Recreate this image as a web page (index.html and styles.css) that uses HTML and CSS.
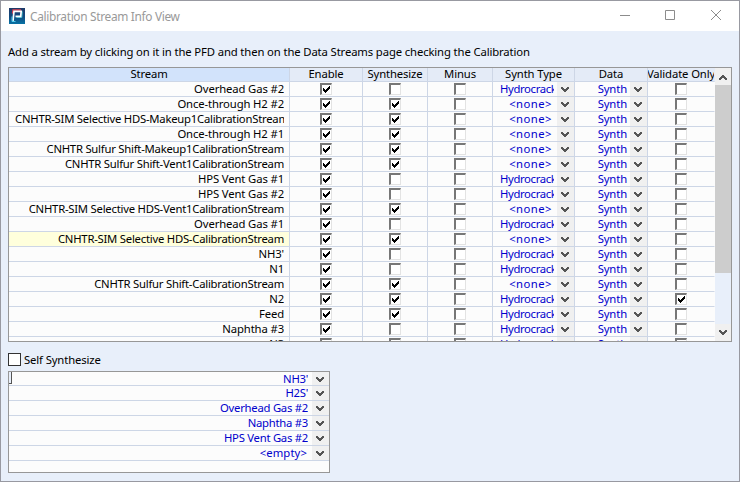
FILE: index.html
```html
<!DOCTYPE html>
<html lang="en">
<head>
<meta charset="utf-8">
<title>Calibration Stream Info View</title>
<link rel="stylesheet" href="styles.css">
</head>
<body>
<svg width="0" height="0" class="defs">
  <symbol id="chev" viewBox="0 0 8 6"><path d="M0 0h2v1h1v1h2v-1h1v-1h2v2h-1v1h-1v1h-1v1h-2v-1h-1v-1h-1v-1h-1z" fill="#555"/></symbol>
  <symbol id="tick" viewBox="0 0 7 7"><path d="M0 2h1v1h1v1h1v-1h1v-1h1v-1h1v-1h1v3h-1v1h-1v1h-1v1h-1v1h-1v-1h-1v-1h-1z" fill="#000"/></symbol>
</svg>
<div class="window">
  <header class="titlebar">
    <svg class="logo" width="16" height="16" viewBox="0 0 16 16">
      <defs><linearGradient id="lg" x2="0" y2="1"><stop offset="0" stop-color="#203a68"/><stop offset=".55" stop-color="#104a80"/><stop offset="1" stop-color="#0873a5"/></linearGradient></defs>
      <rect width="16" height="16" fill="url(#lg)"/>
      <path d="M3.5 5.500L4 2H12" fill="none" stroke="#e04052" stroke-width="1.3"/>
      <path d="M13.300 3.500l-.5 6H7.500" fill="none" stroke="#35b8c8" stroke-width="1"/>
      <path d="M4 12.800L5 3.400h7.200l-.5 4.900h-5.200" fill="none" stroke="#fff" stroke-width="1.700"/>
      <path d="M3 8.500v5h3.500" fill="none" stroke="#50cbed" stroke-width="1"/>
    </svg>
    <span class="title">Calibration Stream Info View</span>
    <svg class="controls" width="110" height="12" viewBox="0 0 110 12" fill="none" stroke="#8c8c8c"><path d="M0 5.5h10M45.500 .500h9v9h-9zM91 0l10 10M101 0l-10 10"/></svg>
  </header>
  <main>
    <p class="hint">Add a stream by clicking on it in the PFD and then on the Data Streams page checking the Calibration</p>
    <section class="grid-box">
      <div class="grid" id="grid">
        <div class="row head">
          <span class="first">Stream</span><span>Enable</span><span>Synthesize</span><span>Minus</span><span>Synth Type</span><span>Data</span><span class="tight">Validate Only</span>
        </div>
      </div>
      <div class="scroll">
        <i class="arrow"><svg class="up" width="8" height="6"><use href="#chev"/></svg></i>
        <i class="thumb"></i>
        <i class="arrow"><svg width="8" height="6"><use href="#chev"/></svg></i>
      </div>
    </section>
    <label class="self"><i class="bigbox"></i><span>Self Synthesize</span></label>
    <section class="list" id="list"></section>
  </main>
</div>
<script src="script.js"></script>
</body>
</html>
```
FILE: styles.css
```css
* { box-sizing: border-box; }
body { margin: 0; font-family: "Noto Sans", "Open Sans", sans-serif; font-size: 11.3px; letter-spacing: -.13px; color: #000; }
.defs { position: absolute; }
svg { display: block; flex: none; }
.window { width: 740px; height: 482px; background: #e8effa; border: 1px solid #9899a1; overflow: hidden; }
.titlebar { height: 30px; background: #fff; display: flex; align-items: center; padding: 0 8px; }
.title { margin-left: 5px; font-size: 11.9px; letter-spacing: -.33px; color: #999; white-space: nowrap; flex: 1; }
.controls { margin-right: 1px; }
main { padding: 0 7px; }
.hint { margin: 0; height: 36px; padding-top: 12px; line-height: 18px; white-space: nowrap; }
.grid-box { width: 724px; height: 275px; border: 1px solid #979797; display: flex; overflow: hidden; background: #fcfcfc; }
.grid { width: 706px; height: 273px; overflow: hidden; }
.row { display: grid; grid-template-columns: 281px 73px 65px 65px 82px 73px 67px; height: 15px; }
.row > * { border-right: 1px solid #cdd6e6; border-bottom: 1px solid #cdd6e6; min-width: 0; overflow: hidden; white-space: nowrap; line-height: 14px; }
.row > :last-child { border-right-color: transparent; }
.head { height: 14px; background: #e4ebf7; }
.head > * { text-align: center; line-height: 12px; overflow: visible; }
.head .first { background: #d2e3fb; }
.head .tight { display: flex; justify-content: center; overflow: hidden; }
.name { display: flex; justify-content: flex-end; padding-right: 5px; padding-left: 6px; }
.name span { overflow: hidden; }
.name .long { letter-spacing: -.24px; }
.selected .name { background: #ffffdc; }
.check { display: flex; align-items: center; justify-content: center; }
.box { width: 12px; height: 12px; background: #fff; border: 2px solid; border-color: #777 #e3e3e3 #e3e3e3 #777; border-right-width: 1px; border-bottom-width: 1px; padding: 1px; }
.combo { display: flex; color: #0000cc; }
.combo .value { flex: 1; min-width: 0; display: flex; justify-content: flex-end; overflow: hidden; margin-left: 7px; margin-right: 3px; }
.combo .value.long { justify-content: flex-start; letter-spacing: -.35px; }
.value.pad { padding-right: 2px; letter-spacing: .45px; }
.drop { width: 17px; background: #f0f0f0; display: flex; justify-content: center; align-items: center; padding: 2px 2px 0 0; }
.scroll { width: 16px; display: flex; flex-direction: column; background: #e8effa; }
.arrow { height: 17px; background: #f0f0f0; display: flex; justify-content: center; align-items: center; }
.arrow:last-child { margin-top: auto; }
.up { transform: rotate(180deg); }
.thumb { height: 188px; background: #cdcdcd; }
.self { display: flex; align-items: center; height: 13px; margin-top: 11px; gap: 3px; line-height: 13px; }
.bigbox { width: 13px; height: 13px; border: 1px solid #333; background: #fff; }
.list { width: 322px; height: 102px; margin-top: 5px; border: 1px solid #979797; background: #fcfcfc; }
.list .combo { height: 15px; border-bottom: 1px solid #cdd6e6; line-height: 14px; white-space: nowrap; }
.list .combo:first-child { height: 14px; line-height: 13px; }
.list .value { margin-right: 4px; letter-spacing: -.26px; }
.list .value.pad { letter-spacing: .1px; padding-right: 1px; }
.caret { width: 3px; height: 12px; background: #e8effa; border-right: 1px solid #555; border-bottom: 1px solid #555; }
```
FILE: script.js
```js
const streams = [
  ["Overhead Gas #2", 0, "Hydrocrack", 0],
  ["Once-through H2 #2", 1, "<none>", 0],
  ["CNHTR-SIM Selective HDS-Makeup1CalibrationStream", 1, "<none>", 0],
  ["Once-through H2 #1", 1, "<none>", 0],
  ["CNHTR Sulfur Shift-Makeup1CalibrationStream", 1, "<none>", 0],
  ["CNHTR Sulfur Shift-Vent1CalibrationStream", 1, "<none>", 0],
  ["HPS Vent Gas #1", 0, "Hydrocrack", 0],
  ["HPS Vent Gas #2", 0, "Hydrocrack", 0],
  ["CNHTR-SIM Selective HDS-Vent1CalibrationStream", 1, "<none>", 0],
  ["Overhead Gas #1", 0, "Hydrocrack", 0],
  ["CNHTR-SIM Selective HDS-CalibrationStream", 1, "<none>", 0],
  ["NH3'", 0, "Hydrocrack", 0],
  ["N1", 0, "Hydrocrack", 0],
  ["CNHTR Sulfur Shift-CalibrationStream", 1, "<none>", 0],
  ["N2", 1, "Hydrocrack", 1],
  ["Feed", 1, "Hydrocrack", 0],
  ["Naphtha #3", 0, "Hydrocrack", 0],
  ["N3", 0, "Hydrocrack", 0]
];
const esc = s => s.replace("<", "&lt;").replace(">", "&gt;");
const check = on => `<span class="check"><i class="box">${on ? '<svg width="7" height="7"><use href="#tick"/></svg>' : ""}</i></span>`;
const combo = (v, lead = "") => {
  const kind = v === "Hydrocrack" ? " long" : v[0] === "<" ? " pad" : "";
  return `<div class="combo">${lead}<span class="value${kind}">${esc(v)}</span><span class="drop"><svg width="8" height="6"><use href="#chev"/></svg></span></div>`;
};
document.getElementById("grid").insertAdjacentHTML("beforeend", streams.map(([n, s, t, v], i) =>
  `<div class="row${i === 10 ? " selected" : ""}"><div class="name"><span${n.length > 20 ? ' class="long"' : ""}>${n}</span></div>${check(1)}${check(s)}${check(0)}${combo(t)}${combo("Synth")}${check(v)}</div>`).join(""));
document.getElementById("list").innerHTML = ["NH3'", "H2S'", "Overhead Gas #2", "Naphtha #3", "HPS Vent Gas #2", "<empty>"]
  .map((v, i) => combo(v, i ? "" : '<i class="caret"></i>')).join("");
```
